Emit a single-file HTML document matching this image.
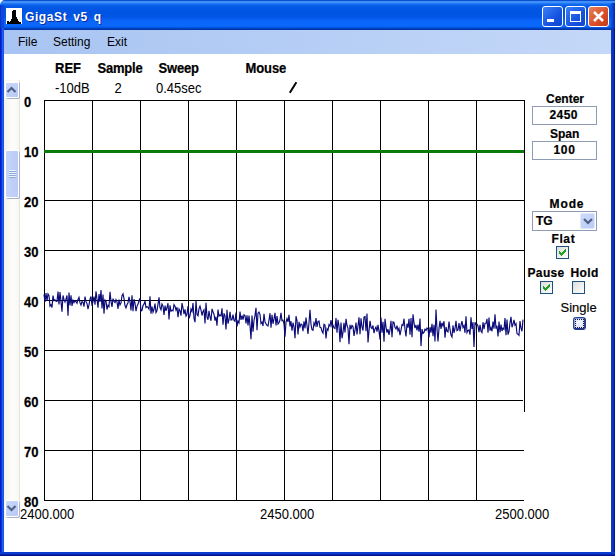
<!DOCTYPE html>
<html><head><meta charset="utf-8">
<style>
*{margin:0;padding:0;box-sizing:border-box}
html,body{width:615px;height:556px;overflow:hidden;background:#fff;font-family:"Liberation Sans",sans-serif}
.a{position:absolute}
#title{left:0;top:0;width:615px;height:30px;border-radius:5px 0 0 0;
 background:linear-gradient(to bottom,#0a4fd0 0px,#0a4fd0 1px,#3f8ff8 1px,#4090f8 2.5px,#2a80fa 3px,#1a72f4 4px,#0a62ea 5px,#0458e6 7px,#0054e2 12px,#0055e4 17px,#0a5ef0 19px,#0a66fa 21px,#0a68fa 26px,#0560f2 27px,#004cd0 28px,#0038ac 29px,#0034a4 30px);}
#ttext{left:25px;top:10px;color:#fff;font:bold 12px "Liberation Sans",sans-serif;letter-spacing:0.6px;word-spacing:2px;text-shadow:1px 1px 0 #0a2a9a}
#menu{left:4px;top:30px;width:607px;height:24px;background:linear-gradient(to right,#a8c4f2,#c4d8f8)}
.mi{top:35px;font-size:12px;color:#000}
#lb{left:0;top:28px;width:4px;height:528px;background:linear-gradient(to right,#001cc8 0,#001cc8 1px,#0834e0 1px,#0834e0 2px,#1a5ef4 2px,#1a5ef4 3px,#1c54dc 3px)}
#rb{left:611px;top:28px;width:4px;height:528px;background:linear-gradient(to right,#1838b8 0,#1838b8 1px,#0c34c4 1px,#0c34c4 2px,#0a2ec0 2px,#0a2ec0 3px,#001a90 3px)}
#bb{left:0;top:552px;width:615px;height:4px;background:linear-gradient(to bottom,#0c3cc8 0,#0c3cc8 1px,#0a3ad8 1px,#0a3ad8 2px,#0422a8 2px,#0422a8 3px,#001490 3px)}
.btn{top:6px;width:21px;height:21px;border:1px solid #fff;border-radius:3px}
.lab{font-weight:bold;font-size:13px;color:#000;-webkit-text-stroke:0.2px #000}
.val{font-size:13px;color:#000}
.sy{transform:scaleY(1.1);transform-origin:0 0}
.yl{left:24px;font-weight:bold;font-size:13px;-webkit-text-stroke:0.25px #000}
.box{border:1px solid #8e9cb4;background:#fff}
.cb{width:13px;height:13px;border:1px solid #1c5180;background:linear-gradient(135deg,#dcdcd7,#fff)}
</style></head><body>
<div id="title" class="a"></div>
<div class="a" style="left:6px;top:8px;width:16px;height:16px;background:#fff">
 <svg width="16" height="16" viewBox="0 0 16 16"><path d="M7 2 H10 V9 H11 V11 H12 V13 H13 V14 H15 V16 H1 V13 H3 V14 H4 V13 H5 V11 H6 V3 H7 Z" fill="#000" shape-rendering="crispEdges"/></svg>
</div>
<div id="ttext" class="a">GigaSt v5 q</div>
<div class="a btn" style="left:542px;background:linear-gradient(135deg,#3c80f8,#1653e0 60%,#0d45d0)"><div class="a" style="left:4px;top:12px;width:7px;height:3px;background:#fff"></div></div>
<div class="a btn" style="left:565px;background:linear-gradient(135deg,#3c80f8,#1653e0 60%,#0d45d0)"><div class="a" style="left:4px;top:4px;width:11px;height:11px;border:1px solid #fff;border-top-width:3px"></div></div>
<div class="a btn" style="left:588px;background:linear-gradient(135deg,#e8825c,#d9502a 55%,#c23a18)">
 <svg class="a" style="left:0;top:0" width="19" height="19" viewBox="0 0 19 19"><path d="M5 5 L14 14 M14 5 L5 14" stroke="#fff" stroke-width="2.6"/></svg></div>
<div id="menu" class="a"></div>
<div class="a mi" style="left:18px">File</div>
<div class="a mi" style="left:53px">Setting</div>
<div class="a mi" style="left:107px">Exit</div>
<div id="lb" class="a"></div><div id="rb" class="a"></div><div id="bb" class="a"></div>
<div class="a" style="left:611px;top:3px;width:4px;height:25px;background:linear-gradient(to right,#0c4ee4 0,#0c4ee4 1px,#0a44da 1px,#0a44da 2px,#0838c8 2px,#0838c8 3px,#062cb0 3px)"></div>
<div class="a" style="left:0;top:5px;width:4px;height:23px;background:linear-gradient(to right,#0a34c8 0,#0a34c8 1px,#0a48e0 1px)"></div>

<!-- scrollbar -->
<div class="a" style="left:4px;top:80px;width:16px;height:438px;background:linear-gradient(to right,#f4f2ee,#fdfdfb 60%,#f8f7f3);border-right:1px solid #e4e4dc"></div>
<div class="a" style="left:5px;top:81px;width:14px;height:17px;border:1px solid #fff;border-top-width:2px;border-radius:2px;background:linear-gradient(135deg,#cbd8fb,#b8c9f5);box-shadow:1px 1px 0 #a8b2cc"></div>
<svg class="a" style="left:6px;top:85px" width="12" height="10"><path d="M1.5 7 L5.5 3 L9.5 7" stroke="#4d6185" stroke-width="2.2" fill="none"/></svg>
<div class="a" style="left:5px;top:150px;width:14px;height:48px;border:1px solid #fff;border-radius:2px;background:linear-gradient(to right,#c6d4fa,#bccbf6);box-shadow:1px 1px 0 #a8b2cc"></div>
<div class="a" style="left:9px;top:170px;width:7px;height:8px;background:repeating-linear-gradient(#eef3fe 0 1px,#8fa8e0 1px 2px)"></div>
<div class="a" style="left:5px;top:500px;width:14px;height:17px;border:1px solid #fff;border-radius:2px;background:linear-gradient(135deg,#cbd8fb,#b8c9f5);box-shadow:1px 1px 0 #a8b2cc"></div>
<svg class="a" style="left:6px;top:503px" width="12" height="10"><path d="M1.5 3 L5.5 7 L9.5 3" stroke="#4d6185" stroke-width="2.2" fill="none"/></svg>

<!-- header -->
<div class="a lab sy" style="left:55px;top:60px">REF</div>
<div class="a lab sy" style="left:97.5px;top:60px;letter-spacing:-0.2px">Sample</div>
<div class="a lab sy" style="left:158.5px;top:60px;letter-spacing:-0.2px">Sweep</div>
<div class="a lab sy" style="left:245.5px;top:60px;letter-spacing:-0.1px">Mouse</div>
<div class="a val sy" style="left:55px;top:80px">-10dB</div>
<div class="a val sy" style="left:114.5px;top:80px">2</div>
<div class="a val sy" style="left:156px;top:80px">0.45sec</div>
<svg class="a" style="left:288px;top:81px" width="10" height="13"><path d="M1.8 11.8 L8.4 1.2" stroke="#000" stroke-width="2"/></svg>

<!-- y labels -->
<div class="a yl sy" style="top:94px">0</div>
<div class="a yl sy" style="top:144px">10</div>
<div class="a yl sy" style="top:194px">20</div>
<div class="a yl sy" style="top:244px">30</div>
<div class="a yl sy" style="top:294px">40</div>
<div class="a yl sy" style="top:344px">50</div>
<div class="a yl sy" style="top:394px">60</div>
<div class="a yl sy" style="top:444px">70</div>
<div class="a yl sy" style="top:494px">80</div>

<!-- grid -->
<svg class="a" style="left:0;top:0" width="615" height="556" shape-rendering="crispEdges">
 <g stroke="#000" stroke-width="1">
 <line x1="44.5" y1="100" x2="44.5" y2="501"/>
 <line x1="92.5" y1="100" x2="92.5" y2="501"/>
 <line x1="140.5" y1="100" x2="140.5" y2="501"/>
 <line x1="188.5" y1="100" x2="188.5" y2="501"/>
 <line x1="236.5" y1="100" x2="236.5" y2="501"/>
 <line x1="284.5" y1="100" x2="284.5" y2="501"/>
 <line x1="332.5" y1="100" x2="332.5" y2="501"/>
 <line x1="380.5" y1="100" x2="380.5" y2="501"/>
 <line x1="428.5" y1="100" x2="428.5" y2="501"/>
 <line x1="476.5" y1="100" x2="476.5" y2="501"/>
 <line x1="524.5" y1="100" x2="524.5" y2="412"/>
 <line x1="44" y1="100.5" x2="525" y2="100.5"/>
 <line x1="44" y1="150.5" x2="525" y2="150.5"/>
 <line x1="44" y1="200.5" x2="525" y2="200.5"/>
 <line x1="44" y1="250.5" x2="525" y2="250.5"/>
 <line x1="44" y1="300.5" x2="525" y2="300.5"/>
 <line x1="44" y1="350.5" x2="525" y2="350.5"/>
 <line x1="44" y1="400.5" x2="523" y2="400.5"/>
 <line x1="44" y1="450.5" x2="524" y2="450.5"/>
 <line x1="44" y1="500.5" x2="524" y2="500.5"/>
 </g>
 <polyline fill="none" stroke="#0a0a78" stroke-width="1.15" shape-rendering="auto" points="44,294.3 45,301.9 46,293.1 47,300.6 48,294.0 49,295.7 50,306.1 51,304.7 52,307.5 53,295.6 54,300.7 55,299.9 56,301.2 57,301.4 58,291.6 59,304.4 60,292.0 61,301.6 62,311.8 63,295.5 64,299.4 65,302.1 66,299.1 67,295.5 68,315.8 69,292.6 70,305.5 71,295.3 72,306.0 73,300.2 74,302.6 75,300.7 76,301.6 77,303.3 78,299.4 79,297.3 80,302.9 81,305.1 82,301.4 83,302.2 84,306.6 85,296.5 86,301.9 87,303.4 88,309.2 89,304.7 90,299.1 91,296.5 92,305.8 93,301.4 94,296.5 95,304.8 96,291.2 97,299.2 98,307.6 99,294.1 100,301.9 101,290.0 102,308.5 103,294.6 104,313.8 105,300.0 106,301.1 107,309.5 108,305.3 109,306.6 110,291.8 111,301.3 112,307.0 113,298.6 114,301.3 115,302.6 116,299.6 117,301.8 118,309.0 119,299.6 120,305.0 121,302.9 122,295.6 123,293.9 124,298.4 125,305.5 126,307.9 127,304.8 128,302.7 129,296.9 130,301.8 131,310.4 132,295.2 133,311.2 134,299.2 135,303.0 136,311.2 137,306.3 138,304.0 139,300.9 140,298.2 141,311.0 142,310.4 143,305.6 144,304.2 145,301.2 146,307.6 147,306.6 148,307.2 149,309.2 150,296.4 151,313.7 152,306.6 153,312.2 154,309.3 155,303.5 156,312.5 157,310.6 158,304.1 159,297.4 160,307.5 161,309.7 162,303.9 163,305.8 164,315.0 165,305.7 166,310.9 167,307.5 168,303.2 169,319.5 170,305.4 171,311.2 172,310.3 173,310.9 174,304.6 175,306.3 176,310.1 177,307.3 178,317.3 179,309.0 180,310.6 181,315.7 182,303.1 183,307.8 184,314.2 185,309.4 186,316.1 187,314.5 188,306.1 189,318.5 190,315.7 191,309.2 192,311.6 193,303.1 194,318.1 195,322.2 196,300.9 197,314.5 198,315.8 199,308.6 200,306.1 201,310.0 202,315.5 203,311.5 204,309.8 205,323.5 206,302.7 207,316.9 208,319.7 209,310.9 210,317.0 211,320.8 212,308.9 213,311.8 214,314.2 215,320.7 216,316.7 217,325.7 218,309.5 219,316.2 220,315.0 221,315.8 222,308.4 223,324.8 224,313.4 225,315.8 226,329.5 227,309.9 228,323.6 229,319.7 230,311.9 231,320.0 232,319.7 233,314.6 234,320.4 235,321.3 236,312.5 237,326.5 238,321.1 239,322.8 240,311.6 241,320.0 242,315.5 243,319.7 244,314.7 245,315.5 246,323.5 247,315.3 248,325.5 249,315.5 250,325.8 251,339.3 252,315.5 253,331.6 254,320.5 255,315.6 256,307.9 257,330.3 258,313.2 259,312.0 260,314.4 261,323.5 262,322.1 263,326.0 264,313.8 265,322.1 266,323.7 267,325.4 268,326.1 269,320.0 270,313.2 271,327.7 272,314.7 273,323.8 274,318.9 275,312.9 276,325.5 277,316.1 278,324.1 279,322.8 280,320.0 281,312.8 282,320.8 283,320.1 284,323.9 285,336.7 286,322.2 287,318.6 288,321.9 289,314.9 290,326.4 291,321.2 292,330.7 293,322.7 294,326.5 295,338.2 296,316.2 297,320.5 298,334.5 299,321.8 300,327.0 301,324.1 302,324.7 303,331.2 304,321.4 305,328.3 306,317.6 307,325.5 308,334.0 309,322.7 310,309.9 311,324.5 312,329.7 313,330.3 314,322.9 315,325.4 316,318.1 317,327.0 318,321.4 319,321.1 320,327.3 321,327.7 322,331.3 323,333.1 324,324.3 325,325.1 326,338.5 327,328.7 328,330.3 329,324.7 330,326.1 331,320.2 332,326.3 333,325.1 334,327.9 335,328.5 336,318.1 337,332.8 338,319.9 339,326.2 340,342.3 341,322.5 342,338.3 343,332.3 344,322.8 345,332.5 346,318.8 347,325.5 348,328.3 349,344.2 350,324.8 351,329.1 352,325.4 353,326.6 354,336.0 355,330.2 356,322.5 357,334.5 358,325.7 359,317.2 360,334.3 361,318.3 362,326.8 363,330.5 364,317.0 365,316.5 366,331.1 367,313.6 368,342.4 369,330.7 370,320.8 371,327.4 372,328.6 373,325.5 374,333.2 375,328.9 376,327.0 377,331.6 378,324.9 379,331.2 380,339.5 381,317.6 382,332.8 383,321.7 384,341.6 385,318.9 386,327.0 387,332.6 388,329.2 389,334.9 390,329.9 391,320.8 392,337.3 393,321.9 394,322.4 395,327.6 396,328.9 397,325.7 398,330.8 399,328.4 400,335.2 401,330.2 402,324.7 403,325.4 404,318.7 405,329.4 406,336.4 407,323.7 408,327.6 409,318.9 410,334.8 411,318.1 412,337.3 413,314.3 414,322.8 415,328.2 416,325.0 417,330.5 418,324.7 419,331.6 420,318.6 421,346.1 422,329.1 423,333.4 424,332.5 425,329.2 426,330.4 427,327.9 428,328.9 429,337.2 430,327.2 431,332.7 432,323.7 433,336.3 434,324.7 435,341.5 436,309.6 437,329.1 438,341.5 439,328.4 440,320.8 441,328.9 442,322.9 443,325.8 444,321.2 445,337.8 446,327.0 447,331.2 448,332.0 449,321.5 450,329.2 451,335.0 452,337.0 453,325.3 454,332.8 455,328.7 456,320.9 457,330.7 458,330.0 459,323.0 460,331.3 461,325.2 462,321.2 463,327.4 464,325.5 465,332.8 466,316.4 467,332.5 468,330.4 469,330.0 470,334.7 471,317.2 472,329.0 473,322.2 474,347.0 475,322.2 476,324.6 477,324.2 478,326.0 479,332.2 480,324.9 481,331.2 482,332.5 483,322.2 484,329.1 485,323.4 486,323.2 487,318.9 488,332.8 489,317.5 490,330.6 491,327.5 492,331.3 493,321.5 494,328.6 495,314.2 496,328.6 497,325.7 498,336.5 499,321.5 500,332.5 501,324.5 502,331.0 503,328.2 504,329.3 505,318.0 506,335.1 507,319.5 508,334.6 509,331.6 510,322.8 511,316.9 512,327.2 513,324.1 514,319.8 515,325.2 516,323.7 517,333.7 518,334.2 519,335.4 520,321.0 521,328.1 522,331.2 523,319.6"/>
 <rect x="44" y="150" width="480" height="3" fill="#0a7a0a"/>
</svg>

<div class="a val sy" style="left:20px;top:506px">2400.000</div>
<div class="a val sy" style="left:260px;top:506px">2450.000</div>
<div class="a val sy" style="left:495px;top:506px">2500.000</div>

<!-- right panel -->
<div class="a lab" style="left:546px;top:92px;font-size:12px">Center</div>
<div class="a box" style="left:532px;top:106px;width:65px;height:19px"></div>
<div class="a lab" style="left:549.5px;top:108px;font-size:12px;letter-spacing:0.4px">2450</div>
<div class="a lab" style="left:550px;top:127px;font-size:12px">Span</div>
<div class="a box" style="left:532px;top:141px;width:65px;height:19px"></div>
<div class="a lab" style="left:553.5px;top:143px;font-size:12px;letter-spacing:0.7px">100</div>

<div class="a lab" style="left:549.5px;top:197px;font-size:12px;letter-spacing:0.9px">Mode</div>
<div class="a box" style="left:532px;top:211px;width:65px;height:20px"></div>
<div class="a lab" style="left:536px;top:214px;font-size:12px">TG</div>
<div class="a" style="left:580px;top:213px;width:15px;height:16px;border-radius:2px;border:1px solid #dfe8fb;background:linear-gradient(135deg,#cddafb,#b9cbf6)"></div>
<svg class="a" style="left:582px;top:216px" width="12" height="10"><path d="M2 3 L6 7 L10 3" stroke="#4d6185" stroke-width="2.2" fill="none"/></svg>

<div class="a lab" style="left:551.5px;top:232px;font-size:12px;letter-spacing:0.6px">Flat</div>
<div class="a cb" style="left:556px;top:246px"></div>
<svg class="a" style="left:556px;top:246px" width="13" height="13" shape-rendering="crispEdges"><path d="M9 3h1v1h-1zM8 4h1v1h-1zM9 4h1v1h-1zM3 5h1v1h-1zM7 5h1v1h-1zM8 5h1v1h-1zM9 5h1v1h-1zM3 6h1v1h-1zM4 6h1v1h-1zM6 6h1v1h-1zM7 6h1v1h-1zM8 6h1v1h-1zM3 7h1v1h-1zM4 7h1v1h-1zM5 7h1v1h-1zM6 7h1v1h-1zM7 7h1v1h-1zM4 8h1v1h-1zM5 8h1v1h-1zM6 8h1v1h-1zM5 9h1v1h-1z" fill="#21a121"/></svg>
<div class="a lab" style="left:527.5px;top:266px;font-size:12px;letter-spacing:0.35px">Pause</div>
<div class="a lab" style="left:570.5px;top:266px;font-size:12px;letter-spacing:0.4px">Hold</div>
<div class="a cb" style="left:540px;top:281px"></div>
<svg class="a" style="left:540px;top:281px" width="13" height="13" shape-rendering="crispEdges"><path d="M9 3h1v1h-1zM8 4h1v1h-1zM9 4h1v1h-1zM3 5h1v1h-1zM7 5h1v1h-1zM8 5h1v1h-1zM9 5h1v1h-1zM3 6h1v1h-1zM4 6h1v1h-1zM6 6h1v1h-1zM7 6h1v1h-1zM8 6h1v1h-1zM3 7h1v1h-1zM4 7h1v1h-1zM5 7h1v1h-1zM6 7h1v1h-1zM7 7h1v1h-1zM4 8h1v1h-1zM5 8h1v1h-1zM6 8h1v1h-1zM5 9h1v1h-1z" fill="#21a121"/></svg>
<div class="a cb" style="left:572px;top:281px"></div>
<div class="a" style="left:560.5px;top:300px;font-size:13px;-webkit-text-stroke:0.15px #000">Single</div>
<div class="a" style="left:573px;top:317px;width:13px;height:13px;border:1px solid #2a4598;border-bottom:2px solid #22358a;border-right:2px solid #2a3f92;border-radius:3px;background:radial-gradient(circle at 50% 45%,#f4f8fe,#d4def4);box-shadow:inset 1px 1px 0 #8fa2d8"></div><svg class="a" style="left:573px;top:317px" width="13" height="13" shape-rendering="crispEdges"><path d="M2 2h1v1h-1zM2 10h1v1h-1zM4 2h1v1h-1zM4 10h1v1h-1zM6 2h1v1h-1zM6 10h1v1h-1zM8 2h1v1h-1zM8 10h1v1h-1zM10 2h1v1h-1zM10 10h1v1h-1zM2 4h1v1h-1zM10 4h1v1h-1zM2 6h1v1h-1zM10 6h1v1h-1zM2 8h1v1h-1zM10 8h1v1h-1z" fill="#101838"/></svg>
</body></html>
